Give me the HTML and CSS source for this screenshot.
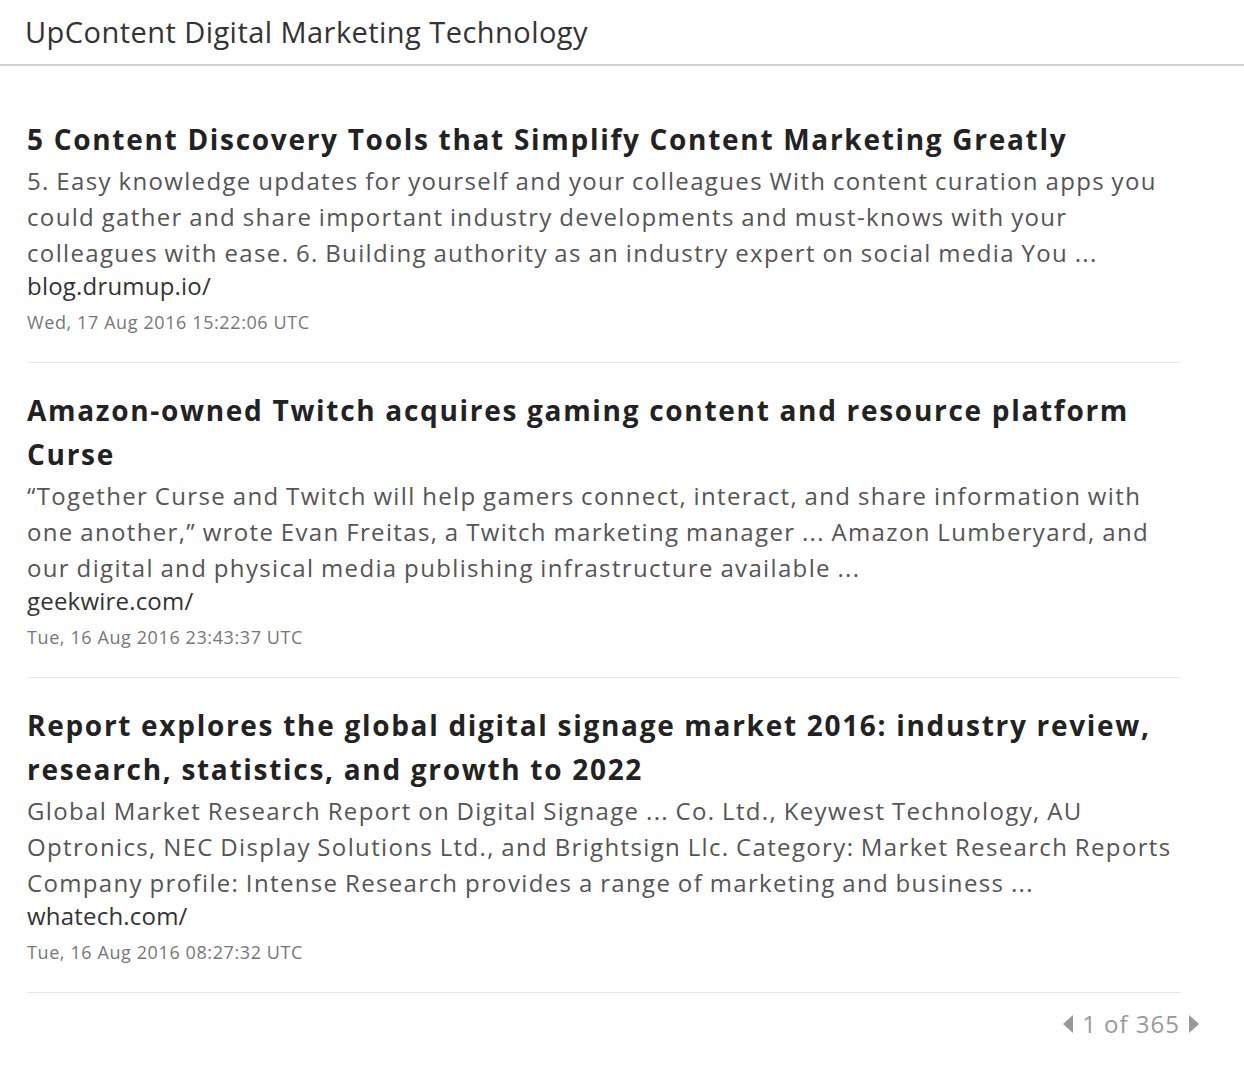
FILE: index.html
```html
<!DOCTYPE html>
<html lang="en">
<head>
    <meta charset="UTF-8">
    <meta name="viewport" content="width=device-width, initial-scale=1.0">
    <title>UpContent Digital Marketing Technology</title>
    <link rel="stylesheet" href="styles.css">
</head>
<body>
    <div class="header">UpContent Digital Marketing Technology</div>

    <div class="feed">
        <div class="item">
            <h3 class="title">5 Content Discovery Tools that Simplify Content Marketing Greatly</h3>
            <p class="summary">5. Easy knowledge updates for yourself and your colleagues With content curation apps you could gather and share important industry developments and must-knows with your colleagues with ease. 6. Building authority as an industry expert on social media You ...</p>
            <div class="source">blog.drumup.io/</div>
            <div class="date">Wed, 17 Aug 2016 15:22:06 UTC</div>
        </div>

        <div class="item">
            <h3 class="title">Amazon-owned Twitch acquires gaming content and resource platform Curse</h3>
            <p class="summary">&ldquo;Together Curse and Twitch will help gamers connect, interact, and share information with one another,&rdquo; wrote Evan Freitas, a Twitch marketing manager ... Amazon Lumberyard, and our digital and physical media publishing infrastructure available ...</p>
            <div class="source">geekwire.com/</div>
            <div class="date">Tue, 16 Aug 2016 23:43:37 UTC</div>
        </div>

        <div class="item">
            <h3 class="title">Report explores the global digital signage market 2016: industry review, research, statistics, and growth to 2022</h3>
            <p class="summary">Global Market Research Report on Digital Signage ... Co. Ltd., Keywest Technology, AU Optronics, NEC Display Solutions Ltd., and Brightsign Llc. Category: Market Research Reports Company profile: Intense Research provides a range of marketing and business ...</p>
            <div class="source">whatech.com/</div>
            <div class="date">Tue, 16 Aug 2016 08:27:32 UTC</div>
        </div>
    </div>

    <div class="pager">
        <svg class="arrow" width="12" height="20" viewBox="0 0 12 20"><polygon points="11,1 11,19 1,10" /></svg>
        <span>1 of 365</span>
        <svg class="arrow" width="12" height="20" viewBox="0 0 12 20"><polygon points="1,1 1,19 11,10" /></svg>
    </div>
</body>
</html>
```

FILE: styles.css
```css
body { margin: 0; font-family: "Open Sans", sans-serif; background: #fff; color: #333; }
.header { height: 64px; line-height: 64px; padding-left: 25px; font-size: 29px; letter-spacing: 0.45px; color: #333; border-bottom: 2px solid #d4d4d4; }
.feed { padding: 26px 63px 0 27px; }
.item { padding: 25px 0; border-bottom: 1px solid #e6e6e6; }
.title { margin: 0 0 2px; font-size: 28px; line-height: 44px; font-weight: 700; letter-spacing: 1.7px; color: #222; }
.summary { margin: 0; font-size: 24px; line-height: 36px; letter-spacing: 1.35px; word-spacing: -1px; color: #555; }
.source { font-size: 24px; line-height: 30px; letter-spacing: 0.2px; color: #333; }
.date { margin-top: 6px; font-size: 18px; line-height: 30px; letter-spacing: 0.6px; color: #777; }
.pager { display: flex; justify-content: flex-end; align-items: center; gap: 8px; margin-top: 16px; padding-right: 44px; font-size: 24px; line-height: 30px; letter-spacing: 1px; color: #999; }
.arrow { fill: #999; }
```
